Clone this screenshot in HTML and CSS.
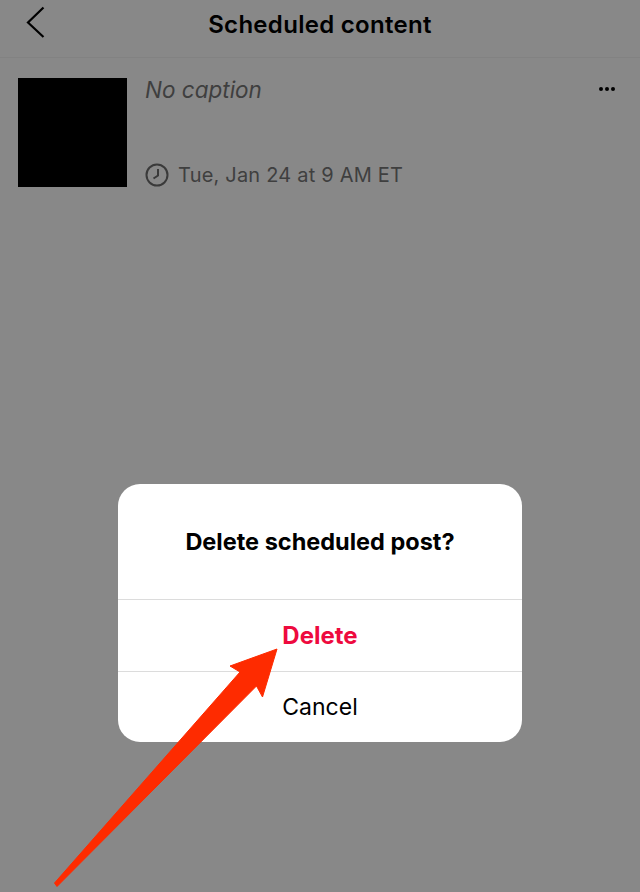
FILE: index.html
```html
<!DOCTYPE html>
<html>
<head>
  <meta charset="UTF-8">
  <title>Scheduled content</title>
  <link rel="stylesheet" href="styles.css">
</head>
<body>
  <div class="screen">
    <!-- header -->
    <div class="header">
      <svg class="back-icon" width="24" height="40" viewBox="0 0 24 40">
        <path d="M19.500 4.500 L4 19.500 L19.500 34" fill="none" stroke="#000" stroke-width="2.200"/>
      </svg>
      <h1 class="title">Scheduled content</h1>
    </div>

    <!-- scheduled post -->
    <div class="post">
      <div class="thumb"></div>
      <div class="post-info">
        <div class="caption">No caption</div>
        <div class="schedule">
          <svg class="clock-icon" width="24" height="24" viewBox="0 0 24 24">
            <circle cx="12" cy="12" r="10.500" fill="none" stroke="#3a3a3a" stroke-width="2"/>
            <path d="M13 6 L13 12.500 L8.500 15.500" fill="none" stroke="#3a3a3a" stroke-width="2"/>
          </svg>
          <span>Tue, Jan 24 at 9 AM ET</span>
        </div>
      </div>
      <div class="more"><i></i><i></i><i></i></div>
    </div>

    <!-- dialog -->
    <div class="dialog">
      <div class="dialog-title">Delete scheduled post?</div>
      <div class="dialog-btn danger">Delete</div>
      <div class="dialog-btn">Cancel</div>
    </div>

    <!-- annotation arrow -->
    <svg class="arrow" width="640" height="892" viewBox="0 0 640 892">
      <path d="M277 649 L230 666 L240 672 L54.500 883 L57 886.500 L256.500 686 L262.500 697 Z" fill="#fe2b00" stroke="#fe2b00" stroke-width="1" stroke-linejoin="round"/>
    </svg>
  </div>
</body>
</html>
```

FILE: styles.css
```css
html, body {
  margin: 0;
  padding: 0;
}
body {
  font-family: "Inter", "Liberation Sans", sans-serif;
  background-color: #888888;
}
.screen {
  position: relative;
  width: 640px;
  height: 892px;
  overflow: hidden;
  background-color: #888888;
}

.header {
  display: flex;
  align-items: center;
  justify-content: center;
  position: relative;
  height: 48px;
  padding-bottom: 9px;
  border-bottom: 1px solid #828282;
}
.back-icon {
  position: absolute;
  left: 24px;
  top: 3px;
}
.title {
  margin: 0;
  font-size: 24px;
  font-weight: 600;
  letter-spacing: 0.3px;
  color: #000;
}

.post {
  display: flex;
  padding: 20px 25px 0 18px;
}
.thumb {
  width: 109px;
  height: 109px;
  background-color: #000;
  flex-shrink: 0;
}
.post-info {
  flex: 1;
  display: flex;
  flex-direction: column;
  justify-content: space-between;
  margin-left: 18px;
  height: 109px;
}
.caption {
  font-size: 22.500px;
  font-style: italic;
  line-height: 24px;
  color: #3f3f3f;
}
.schedule {
  display: flex;
  align-items: center;
  gap: 9px;
  font-size: 20px;
  letter-spacing: 0.2px;
  color: #3f3f3f;
}
.more {
  display: flex;
  gap: 2px;
  margin-top: 9px;
}
.more i {
  display: block;
  width: 4px;
  height: 4px;
  border-radius: 50%;
  background-color: #000;
}

.dialog {
  position: absolute;
  left: 118px;
  top: 484px;
  width: 404px;
  height: 258px;
  display: flex;
  flex-direction: column;
  border-radius: 22px;
  background-color: #fff;
  color: #000;
}
.dialog-title {
  height: 115px;
  display: flex;
  align-items: center;
  justify-content: center;
  font-size: 23.500px;
  font-weight: 700;
}
.dialog-btn {
  flex: 1;
  display: flex;
  align-items: center;
  justify-content: center;
  border-top: 1px solid #dcdcdc;
  font-size: 23px;
}
.dialog-btn.danger {
  color: #ee0a3e;
  font-size: 24px;
  font-weight: 700;
}

.arrow {
  position: absolute;
  left: 0;
  top: 0;
}
```
